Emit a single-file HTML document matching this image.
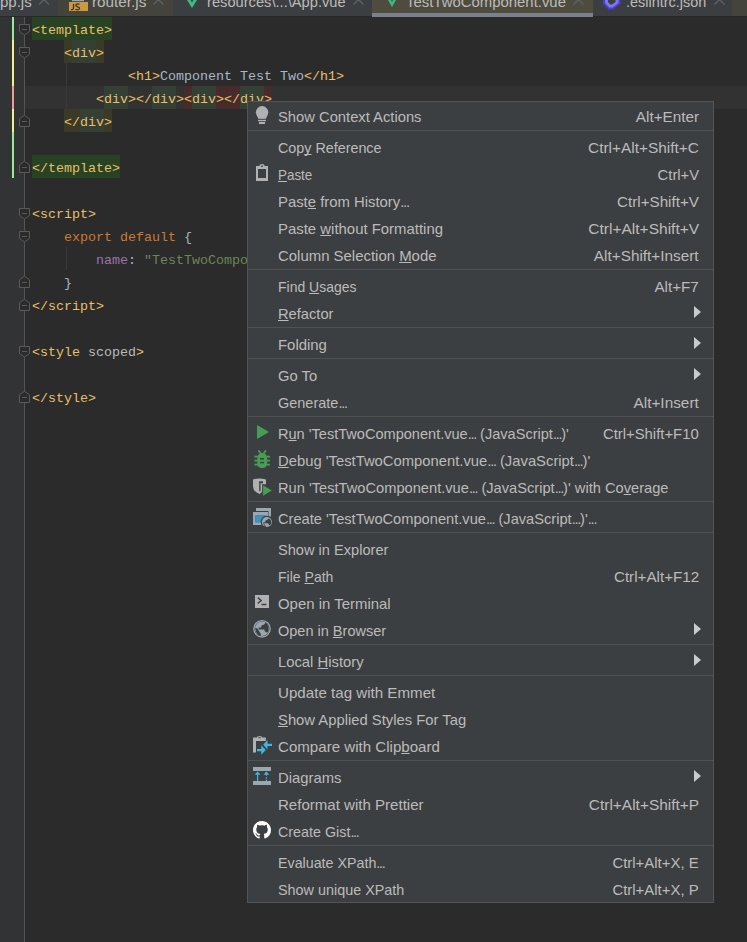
<!DOCTYPE html>
<html><head><meta charset="utf-8">
<style>
*{margin:0;padding:0;box-sizing:border-box}
html,body{width:747px;height:942px;overflow:hidden;background:#2b2b2b;position:relative}
body{font-family:"Liberation Sans",sans-serif}
.a{position:absolute}
/* tabs */
#tabs{position:absolute;left:0;top:0;width:747px;height:16px;background:#3c3f41;overflow:hidden}
#tabs .tab{position:absolute;top:0;height:16px}
#tabs .tt{position:absolute;top:-7px;font-size:15px;line-height:18px;color:#bbbbbb;white-space:pre;transform-origin:0 0}
#tabs .x{position:absolute;top:-5px;width:10px;height:10px}
#tabline{position:absolute;left:0;top:16px;width:747px;height:1px;background:#282828}
/* gutter */
#gut{position:absolute;left:0;top:17px;width:24px;height:925px;background:#313335}
.chg{position:absolute;left:12px;width:2px}
#foldline{position:absolute;left:24px;top:17px;width:1px;height:925px;background:#555555}
.fold{position:absolute;left:18px;width:13px;height:13px}
/* code */
.ln{position:absolute;left:32px;height:23px;line-height:23px;font-family:"Liberation Mono",monospace;font-size:13.333px;white-space:pre;color:#a9b7c6}
.ln span{position:relative}
.tg{color:#e8bf6a}
.kw{color:#cc7832}
.st{color:#6a8759}
.pr{color:#9876aa}
.at{color:#bababa}
.hl{position:absolute;height:23px}
.guide{position:absolute;width:1px;background:#393939}
/* menu */
#menu{position:absolute;left:247px;top:101px;width:467px;height:802px;background:#3c3f41;border:1px solid #555555}
.mi{position:absolute;left:0;width:465px;height:27px}
.mt{position:absolute;left:30px;top:1px;line-height:27px;font-size:15px;color:#bbbbbb;white-space:pre;transform-origin:0 0}
.ms{position:absolute;right:14px;top:1px;line-height:27px;font-size:15px;color:#bbbbbb;white-space:pre;transform-origin:100% 0}
.sep{position:absolute;left:0;width:465px;height:1px;background:#515151}
.arr{position:absolute;left:446px;top:7px;width:7px;height:12px}
.ic{position:absolute;left:4px;top:3px;width:22px;height:22px}
.el{letter-spacing:-1.3px}
u{text-decoration:underline;text-decoration-skip-ink:none}
</style></head><body>

<div id="tabs">
  <div class="tab" style="left:0;width:58px;background:#3c3f41"></div>
  <div class="tab" style="left:58px;width:115px;background:#45443c"></div>
  <div class="tab" style="left:173px;width:199px;background:#3c3f41"></div>
  <div class="tab" style="left:372px;width:221px;background:#4e4b3f"></div>
  
  <div class="tab" style="left:593px;width:139px;background:#3c3f41"></div>
  <div class="tab" style="left:732px;width:15px;background:#45443c"></div>
  <div class="tt" style="left:0px">pp.js</div>
  <div class="tt" style="left:92px;transform:scaleX(1.02)">router.js</div>
  <div class="tt" style="left:207px;transform:scaleX(0.978)">resources\...\App.vue</div>
  <div class="tt" style="left:405.5px;transform:scaleX(0.994)">TestTwoComponent.vue</div>
  <div class="tt" style="left:626px;transform:scaleX(0.963)">.eslintrc.json</div>
  <svg class="a" style="left:0;top:0" width="747" height="16" viewBox="0 0 747 16">
    <g stroke="#5f6163" stroke-width="1.3" fill="none">
      <path d="M39,4.5L44,-0.5L49,4.5"/>
      <path d="M153.5,4.5L158.5,-0.5L163.5,4.5"/>
      <path d="M353.5,4.5L358.5,-0.5L363.5,4.5"/>
      <path d="M573.5,4.5L578.5,-0.5L583.5,4.5"/>
      <path d="M714.5,4.5L719.5,-0.5L724.5,4.5"/>
    </g>
    <rect x="72" y="0" width="12" height="1.2" fill="#9aa7b0"/>
    <rect x="69" y="2" width="19" height="9" fill="#cb9a3e"/>
    <path d="M73.5,4V8.2Q73.5,9.6 72,9.6H71M79.6,4.3Q78.8,3.8 77.6,3.8Q75.8,3.8 75.8,5.3Q75.8,6.4 77.6,6.8Q79.6,7.2 79.6,8.3Q79.6,9.8 77.6,9.8Q76.4,9.8 75.6,9.2" stroke="#3a3222" stroke-width="1.3" fill="none"/>
    <path d="M187,0L197,0L192,8Z" fill="#42b883"/>
    <path d="M190.5,0L193.5,0L192,2.5Z" fill="#35495e"/>
    <path d="M388,0L396,0L392,7Z" fill="#42b883"/>
    <path d="M391,0L393,0L392,2Z" fill="#35495e"/>
    <path d="M603,0V3.5L608.5,9.5H613L620.5,3.5V0Z" fill="#4a3ddb"/>
    <path d="M605,0V3L609.2,7.5H612.5L618.5,3V0Z" fill="#7e78e2"/>
    <path d="M608,0V2L610.2,4.5H612L615.5,2V0Z" fill="#3c3f41"/>
  </svg>
</div>
<div id="tabline"></div>
<div class="a" style="left:372px;top:13px;width:221px;height:4px;background:#7b818a"></div>

<div id="gut"></div>
<div class="a" style="left:25px;top:86px;width:722px;height:23px;background:#323232"></div>
<div class="chg" style="top:17px;height:23px;background:#9be89b"></div>
<div class="chg" style="top:40px;height:46px;background:#f2ee94"></div>
<div class="chg" style="top:86px;height:23px;background:#ef9b9b"></div>
<div class="chg" style="top:109px;height:23px;background:#f2ee94"></div>
<div class="chg" style="top:132px;height:46px;background:#9be89b"></div>
<div id="foldline"></div>
<svg class="a" style="left:0;top:0" width="40" height="942" viewBox="0 0 40 942">
<g fill="#2b2b2b" stroke="#5a5a5a" stroke-width="1">
<path d="M19.5,24.5H29.5V31.5L24.5,35L19.5,31.5Z"/><path d="M22,29.5H27"/>
<path d="M19.5,47.5H29.5V54.5L24.5,58L19.5,54.5Z"/><path d="M22,52.5H27"/>
<path d="M19.5,208.5H29.5V215.5L24.5,219L19.5,215.5Z"/><path d="M22,213.5H27"/>
<path d="M19.5,231.5H29.5V238.5L24.5,242L19.5,238.5Z"/><path d="M22,236.5H27"/>
<path d="M19.5,346.5H29.5V353.5L24.5,357L19.5,353.5Z"/><path d="M22,351.5H27"/>
<path d="M19.5,126.5H29.5V118.8L24.5,115.3L19.5,118.8Z"/><path d="M22,121.5H27"/>
<path d="M19.5,172.5H29.5V164.8L24.5,161.3L19.5,164.8Z"/><path d="M22,167.5H27"/>
<path d="M19.5,287.5H29.5V279.8L24.5,276.3L19.5,279.8Z"/><path d="M22,282.5H27"/>
<path d="M19.5,310.5H29.5V302.8L24.5,299.3L19.5,302.8Z"/><path d="M22,305.5H27"/>
<path d="M19.5,402.5H29.5V394.8L24.5,391.3L19.5,394.8Z"/><path d="M22,397.5H27"/>
</g>
</svg>
<div class="guide" style="left:66px;top:63px;height:46px"></div>
<div class="guide" style="left:66px;top:247px;height:23px"></div>

<!-- highlights -->
<div class="hl" style="top:17px;left:32px;width:80px;background:#284224"></div>
<div class="hl" style="top:155px;left:32px;width:88px;background:#284224"></div>
<div class="hl" style="top:40px;left:64px;width:8px;background:#3b3a27"></div>
<div class="hl" style="top:40px;left:72px;width:24px;background:#354034"></div>
<div class="hl" style="top:40px;left:96px;width:8px;background:#3b3a27"></div>
<div class="hl" style="top:109px;left:64px;width:16px;background:#3b3a27"></div>
<div class="hl" style="top:109px;left:80px;width:24px;background:#354034"></div>
<div class="hl" style="top:109px;left:104px;width:8px;background:#3b3a27"></div>
<div class="hl" style="top:86px;left:104px;width:24px;background:#354034"></div>
<div class="hl" style="top:86px;left:152px;width:24px;background:#354034"></div>
<div class="hl" style="top:86px;left:184px;width:8px;background:#472b2b"></div>
<div class="hl" style="top:86px;left:192px;width:24px;background:#354034"></div>
<div class="hl" style="top:86px;left:216px;width:24px;background:#472b2b"></div>
<div class="hl" style="top:86px;left:240px;width:24px;background:#354034"></div>
<div class="hl" style="top:86px;left:264px;width:8px;background:#472b2b"></div>

<!-- code lines -->
<div class="ln" style="top:19px"><span class="tg">&lt;template&gt;</span></div>
<div class="ln" style="top:42px">    <span class="tg">&lt;div&gt;</span></div>
<div class="ln" style="top:65px">            <span class="tg">&lt;h1&gt;</span>Component Test Two<span class="tg">&lt;/h1&gt;</span></div>
<div class="ln" style="top:88px">        <span class="tg">&lt;div&gt;&lt;/div&gt;&lt;div&gt;&lt;/div&gt;</span></div>
<div class="ln" style="top:111px">    <span class="tg">&lt;/div&gt;</span></div>
<div class="ln" style="top:157px"><span class="tg">&lt;/template&gt;</span></div>
<div class="ln" style="top:203px"><span class="tg">&lt;script&gt;</span></div>
<div class="ln" style="top:226px">    <span class="kw">export default </span>{</div>
<div class="ln" style="top:249px">        <span class="pr">name</span>: <span class="st">"TestTwoComponent"</span></div>
<div class="ln" style="top:272px">    }</div>
<div class="ln" style="top:295px"><span class="tg">&lt;/script&gt;</span></div>
<div class="ln" style="top:341px"><span class="tg">&lt;style </span><span class="at">scoped</span><span class="tg">&gt;</span></div>
<div class="ln" style="top:387px"><span class="tg">&lt;/style&gt;</span></div>

<!-- menu -->
<div id="menu">
<div class="mi" style="top:0px"><div class="mt" style="transform:scaleX(0.9834)">Show Context Actions</div>
<div class="ms" style="transform:scaleX(1.0189)">Alt+Enter</div>
</div>
<div class="sep" style="top:28px"></div>
<div class="mi" style="top:31px"><div class="mt" style="transform:scaleX(0.9547)">Cop<u>y</u> Reference</div>
<div class="ms" style="transform:scaleX(1.0271)">Ctrl+Alt+Shift+C</div>
</div>
<div class="mi" style="top:58px"><div class="mt" style="transform:scaleX(0.8938)"><u>P</u>aste</div>
<div class="ms" style="transform:scaleX(0.9859)">Ctrl+V</div>
</div>
<div class="mi" style="top:85px"><div class="mt" style="transform:scaleX(0.9910)">Past<u>e</u> from History<span class="el">...</span></div>
<div class="ms" style="transform:scaleX(1.0114)">Ctrl+Shift+V</div>
</div>
<div class="mi" style="top:112px"><div class="mt" style="transform:scaleX(0.9944)">Paste <u>w</u>ithout Formatting</div>
<div class="ms" style="transform:scaleX(1.0351)">Ctrl+Alt+Shift+V</div>
</div>
<div class="mi" style="top:139px"><div class="mt" style="transform:scaleX(0.9952)">Column Selection <u>M</u>ode</div>
<div class="ms" style="transform:scaleX(1.0208)">Alt+Shift+Insert</div>
</div>
<div class="sep" style="top:167px"></div>
<div class="mi" style="top:170px"><div class="mt" style="transform:scaleX(0.9319)">Find <u>U</u>sages</div>
<div class="ms" style="transform:scaleX(1.0118)">Alt+F7</div>
</div>
<div class="mi" style="top:197px"><div class="mt" style="transform:scaleX(0.9788)"><u>R</u>efactor</div>
<svg class="arr" width="7" height="12" viewBox="0 0 7 12"><path d="M0,0 L7,6 L0,12 Z" fill="#c9cacb"/></svg>
</div>
<div class="sep" style="top:225px"></div>
<div class="mi" style="top:228px"><div class="mt" style="transform:scaleX(0.9938)">Folding</div>
<svg class="arr" width="7" height="12" viewBox="0 0 7 12"><path d="M0,0 L7,6 L0,12 Z" fill="#c9cacb"/></svg>
</div>
<div class="sep" style="top:256px"></div>
<div class="mi" style="top:259px"><div class="mt" style="transform:scaleX(0.9862)">Go To</div>
<svg class="arr" width="7" height="12" viewBox="0 0 7 12"><path d="M0,0 L7,6 L0,12 Z" fill="#c9cacb"/></svg>
</div>
<div class="mi" style="top:286px"><div class="mt" style="transform:scaleX(0.9655)">Generate<span class="el">...</span></div>
<div class="ms" style="transform:scaleX(1.0238)">Alt+Insert</div>
</div>
<div class="sep" style="top:314px"></div>
<div class="mi" style="top:317px"><div class="mt" style="transform:scaleX(0.9704)">R<u>u</u>n 'TestTwoComponent.vue<span class="el">...</span> (JavaScript<span class="el">...</span>)'</div>
<div class="ms" style="transform:scaleX(0.9905)">Ctrl+Shift+F10</div>
</div>
<div class="mi" style="top:344px"><div class="mt" style="transform:scaleX(0.9866)"><u>D</u>ebug 'TestTwoComponent.vue<span class="el">...</span> (JavaScript<span class="el">...</span>)'</div>
</div>
<div class="mi" style="top:371px"><div class="mt" style="transform:scaleX(0.9767)">Run 'TestTwoComponent.vue<span class="el">...</span> (JavaScript<span class="el">...</span>)' with Co<u>v</u>erage</div>
</div>
<div class="sep" style="top:399px"></div>
<div class="mi" style="top:402px"><div class="mt" style="transform:scaleX(0.9764)">Create 'TestTwoComponent.vue<span class="el">...</span> (JavaScript<span class="el">...</span>)'<span class="el">...</span></div>
</div>
<div class="sep" style="top:430px"></div>
<div class="mi" style="top:433px"><div class="mt" style="transform:scaleX(0.9736)">Show in Explorer</div>
</div>
<div class="mi" style="top:460px"><div class="mt" style="transform:scaleX(0.9355)">File <u>P</u>ath</div>
<div class="ms" style="transform:scaleX(1.0130)">Ctrl+Alt+F12</div>
</div>
<div class="mi" style="top:487px"><div class="mt" style="transform:scaleX(0.9962)">Open in Terminal</div>
</div>
<div class="mi" style="top:514px"><div class="mt" style="transform:scaleX(0.9673)">Open in <u>B</u>rowser</div>
<svg class="arr" width="7" height="12" viewBox="0 0 7 12"><path d="M0,0 L7,6 L0,12 Z" fill="#c9cacb"/></svg>
</div>
<div class="sep" style="top:542px"></div>
<div class="mi" style="top:545px"><div class="mt" style="transform:scaleX(0.9871)">Local <u>H</u>istory</div>
<svg class="arr" width="7" height="12" viewBox="0 0 7 12"><path d="M0,0 L7,6 L0,12 Z" fill="#c9cacb"/></svg>
</div>
<div class="sep" style="top:573px"></div>
<div class="mi" style="top:576px"><div class="mt" style="transform:scaleX(1.0089)">Update tag with Emmet</div>
</div>
<div class="mi" style="top:603px"><div class="mt" style="transform:scaleX(0.9870)"><u>S</u>how Applied Styles For Tag</div>
</div>
<div class="mi" style="top:630px"><div class="mt" style="transform:scaleX(1.0061)">Compare with Clip<u>b</u>oard</div>
</div>
<div class="sep" style="top:658px"></div>
<div class="mi" style="top:661px"><div class="mt" style="transform:scaleX(0.9893)">Diagrams</div>
<svg class="arr" width="7" height="12" viewBox="0 0 7 12"><path d="M0,0 L7,6 L0,12 Z" fill="#c9cacb"/></svg>
</div>
<div class="mi" style="top:688px"><div class="mt" style="transform:scaleX(1.0038)">Reformat with Prettier</div>
<div class="ms" style="transform:scaleX(1.0295)">Ctrl+Alt+Shift+P</div>
</div>
<div class="mi" style="top:715px"><div class="mt" style="transform:scaleX(0.9542)">Create Gist<span class="el">...</span></div>
</div>
<div class="sep" style="top:743px"></div>
<div class="mi" style="top:746px"><div class="mt" style="transform:scaleX(0.9508)">Evaluate XPath<span class="el">...</span></div>
<div class="ms" style="transform:scaleX(0.9954)">Ctrl+Alt+X, E</div>
</div>
<div class="mi" style="top:773px"><div class="mt" style="transform:scaleX(0.9585)">Show unique XPath</div>
<div class="ms" style="transform:scaleX(0.9954)">Ctrl+Alt+X, P</div>
</div>
</div>
<svg class="a" style="left:0;top:0" width="747" height="942" viewBox="0 0 747 942">
<!-- bulb -->
<g fill="#afb1b3">
  <circle cx="262.1" cy="112.3" r="6.2"/>
  <path d="M257.2,115.5H267L266,118.8H258.2Z"/>
  <rect x="258" y="119.8" width="8" height="1.4"/>
  <rect x="259" y="122" width="6" height="2"/>
</g>
<!-- paste clipboard -->
<path fill="#afb1b3" fill-rule="evenodd" d="M256,166H259.2Q259.5,164 262,164Q264.5,164 264.8,166H268V181H256ZM258,169V178H266V169Z"/>
<circle cx="262" cy="166.2" r="0.9" fill="#3c3f41"/>
<!-- run -->
<path fill="#499c54" d="M257,425L269,432L257,439Z"/>
<!-- debug bug -->
<path fill="#499c54" d="M257.3,458.2C257.3,454.6 259.4,453.2 262.2,453.2C265,453.2 267.1,454.6 267.1,458.2V463.2C267.1,466.6 265,468.1 262.2,468.1C259.4,468.1 257.3,466.6 257.3,463.2Z"/>
<g stroke="#499c54" stroke-width="1.8" fill="none">
  <path d="M258.9,451L261.6,454.6M265.5,451L262.8,454.6" stroke-linecap="round"/>
  <path d="M254.4,456.6H258M254.4,460.6H258M254.4,464.7H258M266.5,456.6H270M266.5,460.6H270M266.5,464.7H270"/>
</g>
<g fill="#3c3f41">
  <rect x="260" y="458" width="4" height="1.5"/>
  <rect x="260" y="461.9" width="4" height="1.4"/>
</g>
<!-- coverage -->
<path fill="#afb1b3" d="M253,479.4Q259.5,477.4 266,479.4V484.2H262.4V491.6Q261.2,492.9 259.5,494Q253,491.5 253,486.5Z"/>
<path fill="#3c3f41" d="M259.2,481.3H263V483.2H260.6V491.2H259.2Z"/>
<path fill="#499c54" stroke="#3c3f41" stroke-width="0.8" d="M262.6,484.5L272.4,490.5L262.6,496.5Z"/>
<!-- create -->
<g fill="#9aa7b0">
  <path d="M256,508H271V516.5H268.5V511H256Z"/>
  <path fill-rule="evenodd" d="M253,512H268V525H253ZM255.5,515.4V522.3H265.5V515.4Z"/>
</g>
<rect x="255.5" y="515.4" width="10" height="6.9" fill="#3d93c2"/>
<circle cx="266.9" cy="522" r="6.2" fill="#3c3f41"/>
<circle cx="266.9" cy="522" r="5.1" fill="#9aa7b0"/>
<path fill="#3c3f41" d="M263.3,522.2H265.3V520.7L267.4,519.7L268.7,518.4L270.5,519.8L271.4,522L270.9,524.6L269.4,525.3L268.2,523.7V523.2H263.3Z"/>
<path fill="#3c3f41" d="M262.8,522.9L264,523.5L266.2,526.9L265.4,527.1Z"/>
<!-- terminal -->
<rect x="255" y="595" width="14" height="13" fill="#afb1b3"/>
<path d="M257.8,597.6L261.2,600.5L257.8,603.4M261.5,604.5H266.3" stroke="#3c3f41" stroke-width="1.4" fill="none"/>
<!-- globe -->
<circle cx="262" cy="628.8" r="8.2" fill="none" stroke="#9aa7b0" stroke-width="1.3"/>
<circle cx="262" cy="628.8" r="7.2" fill="#9aa7b0"/>
<path fill="#3c3f41" d="M258.6,627.4H261.3V625.4L263.7,624.7L265.3,623L267.2,623.6L268.6,626.6L268.6,630.9L267.4,632.6L265.8,632.2L264.4,630.5V629.5H258.6Z"/>
<path fill="#3c3f41" d="M255.2,627.8L257.4,628.6L261,634.3L260.5,636L257.6,634.4L255.7,631.3Z"/>
<!-- compare -->
<g fill="#afb1b3">
  <path d="M253,737.5H256.8Q257,736 259.6,736Q262.2,736 262.4,737.5H265.8V741H256V752.6H253Z"/>
</g>
<rect x="258.5" y="737.2" width="2.2" height="1.1" fill="#3c3f41"/>
<g fill="#40b6e0">
  <path d="M257,748.9H261.3V745.2L265.8,750L261.3,754.8V751.2H257Z"/>
  <path d="M272,743.8H267.5V740L263.2,744.8L267.5,749.5V746H272Z"/>
</g>
<!-- diagrams -->
<rect x="253" y="767" width="18" height="4" fill="#9aa7b0"/>
<rect x="253" y="781" width="18" height="4" fill="#9aa7b0"/>
<g fill="#40b6e0">
  <path d="M257.6,771.6L260.6,774.8H258.2V781H257V774.8H254.6Z"/>
  <path d="M266.4,771.6L269.4,774.8H267V775.8H265.8V774.8H263.4Z"/>
  <rect x="265.8" y="777.2" width="1.2" height="1.4"/>
  <rect x="265.8" y="779.6" width="1.2" height="1.4"/>
</g>
<!-- github -->
<path fill="#ffffff" transform="translate(253,821) scale(1.125)" d="M8 0C3.58 0 0 3.58 0 8c0 3.54 2.29 6.53 5.47 7.59.4.07.55-.17.55-.38 0-.19-.01-.82-.01-1.49-2.01.37-2.53-.49-2.69-.94-.09-.23-.48-.94-.82-1.13-.28-.15-.68-.52-.01-.53.63-.01 1.080.58 1.23.82.72 1.21 1.87.87 2.33.66.07-.52.28-.87.51-1.07-1.78-.2-3.64-.89-3.640-3.95 0-.87.31-1.59.82-2.15-.08-.2-.36-1.02.08-2.12 0 0 .67-.21 2.2.82.64-.18 1.32-.27 2-.27.68 0 1.36.09 2 .27 1.53-1.04 2.2-.82 2.2-.82.44 1.1.16 1.92.08 2.12.51.56.82 1.27.82 2.15 0 3.07-1.87 3.75-3.65 3.95.29.25.54.73.54 1.48 0 1.07-.01 1.93-.01 2.2 0 .21.15.46.55.38A8.013 8.013 0 0016 8c0-4.420-3.580-8-8-8z"/>
</svg>

</body></html>
